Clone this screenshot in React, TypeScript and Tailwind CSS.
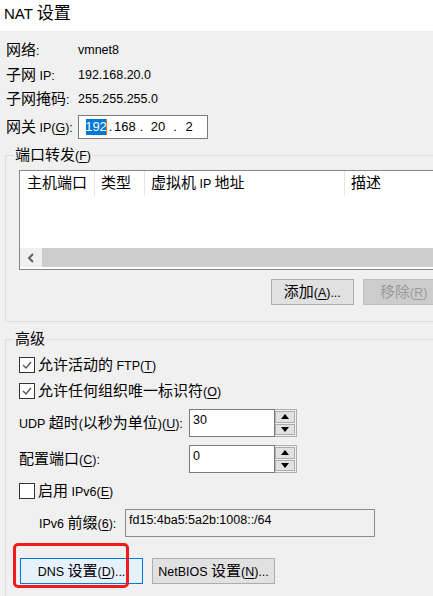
import React from "react";

const CJK = /([\u2E80-\u9FFF\uF900-\uFAFF\uFF00-\uFFEF\u3000-\u303F]+)/;

function runs(str: string, key: string) {
  return str.split(CJK).map((p, i) =>
    i % 2 === 1 ? (
      <span key={key + i} className="text-[15px]">
        {p}
      </span>
    ) : (
      <React.Fragment key={key + i}>{p}</React.Fragment>
    )
  );
}

function T({ s }: { s: string }) {
  const segs = s.split("&");
  const out: React.ReactNode[] = [];
  segs.forEach((seg, idx) => {
    if (idx === 0) {
      out.push(...runs(seg, "a" + idx));
    } else {
      out.push(
        <span key={"u" + idx} className="underline underline-offset-[2px] decoration-1">
          {seg[0]}
        </span>
      );
      out.push(...runs(seg.slice(1), "b" + idx));
    }
  });
  return <span className="whitespace-pre">{out}</span>;
}

function Check({ checked }: { checked: boolean }) {
  return (
    <div className="w-[16px] h-[16px] border border-[#333333] bg-white flex items-center justify-center shrink-0">
      {checked && (
        <svg width="12" height="12" viewBox="0 0 12 12">
          <polyline points="2,6 5,9 10,3" fill="none" stroke="#555555" strokeWidth="1.3" />
        </svg>
      )}
    </div>
  );
}

function Spin({ value }: { value: string }) {
  return (
    <div className="flex h-[28px]">
      <div className="w-[86px] h-[28px] border border-[#7a7a7a] bg-white pl-[3px] pt-[3px] text-[12.5px] leading-[14px]">
        {value}
      </div>
      <div className="w-[22px] h-[28px] border border-l-0 border-[#adadad] bg-[#f0f0f0] flex flex-col pl-[0px] pr-[1px] py-[1px] gap-[1px]">
        <div className="flex-1 bg-[#e1e1e1] border border-[#adadad] flex items-center justify-center">
          <svg width="8" height="5" viewBox="0 0 8 5">
            <polygon points="0,5 8,5 4,0" fill="#000" />
          </svg>
        </div>
        <div className="flex-1 bg-[#e1e1e1] border border-[#adadad] flex items-center justify-center">
          <svg width="8" height="5" viewBox="0 0 8 5">
            <polygon points="0,0 8,0 4,5" fill="#000" />
          </svg>
        </div>
      </div>
    </div>
  );
}

export default function App() {
  return (
    <div className="w-[433px] h-[596px] overflow-hidden bg-[#f0f0f0] text-black text-[12.5px] font-['Liberation_Sans','Noto_Sans_CJK_SC',sans-serif]">
      {/* title */}
      <div className="h-[31px] bg-white">
        <div className="h-[28px] flex items-center pl-[4px] whitespace-pre">
          <span className="text-[15px]">NAT </span>
          <span className="text-[17px]">设置</span>
        </div>
      </div>

      {/* info rows */}
      <div className="pl-[6px] pt-[7px]">
        <div className="flex items-center h-[24px]">
          <div className="w-[72px]"><T s="网络:" /></div>
          <div>vmnet8</div>
        </div>
        <div className="flex items-center h-[24px] mt-[1px]">
          <div className="w-[72px]"><T s="子网 IP:" /></div>
          <div>192.168.20.0</div>
        </div>
        <div className="flex items-center h-[24px]">
          <div className="w-[72px]"><T s="子网掩码:" /></div>
          <div>255.255.255.0</div>
        </div>
        <div className="flex items-center h-[24px] mt-[4px]">
          <div className="w-[72px]"><T s="网关 IP(&G):" /></div>
          <div className="w-[130px] h-[24px] border border-[#7a7a7a] bg-white flex items-center pl-[7px] text-[13px]">
            <span className="w-[21px] h-[16px] bg-[#0078d7] text-white flex items-center justify-center border-r border-[#e07820]">192</span>
            <span className="w-[7px] text-center">.</span>
            <span className="w-[19px] text-center">168</span>
            <span className="w-[17px] text-center">.</span>
            <span className="w-[16px] text-center">20</span>
            <span className="w-[18px] text-center">.</span>
            <span className="w-[10px] text-center">2</span>
          </div>
        </div>
      </div>

      {/* port forwarding group */}
      <div className="relative mt-[16px] ml-[5px] w-[440px] h-[167px] border border-r-0 border-[#dcdcdc]">
        <div className="absolute left-[8px] top-[-10px] px-[1px] bg-[#f0f0f0] leading-[18px]">
          <T s="端口转发(&F)" />
        </div>
        <div className="pl-[13px] pt-[14px]">
          <div className="w-[420px] h-[100px] border border-[#828790] bg-white flex flex-col">
            <div className="h-[25px] flex">
              <div className="w-[75px] border-r border-[#e5e5e5] pl-[7px] flex items-center"><T s="主机端口" /></div>
              <div className="w-[50px] border-r border-[#e5e5e5] pl-[6px] flex items-center"><T s="类型" /></div>
              <div className="w-[200px] border-r border-[#e5e5e5] pl-[6px] flex items-center"><T s="虚拟机 IP 地址" /></div>
              <div className="flex-1 pl-[6px] flex items-center"><T s="描述" /></div>
            </div>
            <div className="h-[52px]" />
            <div className="h-[19px] flex">
              <div className="w-[22px] bg-[#f0f0f0] flex items-center justify-center">
                <svg width="8" height="10" viewBox="0 0 8 10">
                  <polyline points="6,1 2,5 6,9" fill="none" stroke="#606060" strokeWidth="2" />
                </svg>
              </div>
              <div className="flex-1 bg-[#cdcdcd]" />
            </div>
          </div>
          <div className="flex mt-[9px]">
            <div className="ml-[252px] w-[85px] h-[26px] bg-[#e1e1e1] border border-[#adadad] flex items-center justify-center">
              <T s="添加(&A)..." />
            </div>
            <div className="ml-[9px] w-[85px] h-[26px] bg-[#cccccc] border border-[#bfbfbf] flex items-center justify-center text-[#9a9a9a]">
              <T s="移除(&R)" />
            </div>
          </div>
        </div>
      </div>

      {/* advanced group */}
      <div className="relative mt-[17px] ml-[5px] w-[440px] h-[300px] border-l border-t border-[#dcdcdc]">
        <div className="absolute left-[8px] top-[-10px] px-[1px] bg-[#f0f0f0] leading-[18px]">
          <T s="高级" />
        </div>
        <div className="pl-[13px] pt-[17px]">
          <div className="flex items-center h-[16px]">
            <Check checked />
            <div className="ml-[3px]"><T s="允许活动的 FTP(&T)" /></div>
          </div>
          <div className="flex items-center h-[16px] mt-[10px]">
            <Check checked />
            <div className="ml-[3px]"><T s="允许任何组织唯一标识符(&O)" /></div>
          </div>
          <div className="flex items-center h-[28px] mt-[10px]">
            <div className="w-[170px]"><T s="UDP 超时(以秒为单位)(&U):" /></div>
            <Spin value="30" />
          </div>
          <div className="flex items-center h-[28px] mt-[8px]">
            <div className="w-[170px]"><T s="配置端口(&C):" /></div>
            <Spin value="0" />
          </div>
          <div className="flex items-center h-[16px] mt-[10px]">
            <Check checked={false} />
            <div className="ml-[3px]"><T s="启用 IPv6(&E)" /></div>
          </div>
          <div className="flex items-center h-[28px] mt-[10px] pl-[20px]">
            <div className="w-[86px]"><T s="IPv6 前缀(&6):" /></div>
            <div className="w-[250px] h-[28px] border border-[#8c8c8c] bg-[#f0f0f0] pl-[3px] pt-[3px] leading-[14px]">
              fd15:4ba5:5a2b:1008::/64
            </div>
          </div>
          <div className="relative flex mt-[21px]">
            <div className="ml-[1px] w-[123px] h-[26px] bg-[#e5f1fb] border border-[#0078d7] flex items-center justify-center">
              <T s="DNS 设置(&D)..." />
            </div>
            <div className="ml-[9px] w-[123px] h-[26px] bg-[#e1e1e1] border border-[#adadad] flex items-center justify-center">
              <T s="NetBIOS 设置(&N)..." />
            </div>
            <div className="absolute left-[-6px] top-[-15px] w-[116px] h-[45px] border-[3px] border-[#f01c1c] rounded-[5px]" />
          </div>
        </div>
      </div>
    </div>
  );
}
